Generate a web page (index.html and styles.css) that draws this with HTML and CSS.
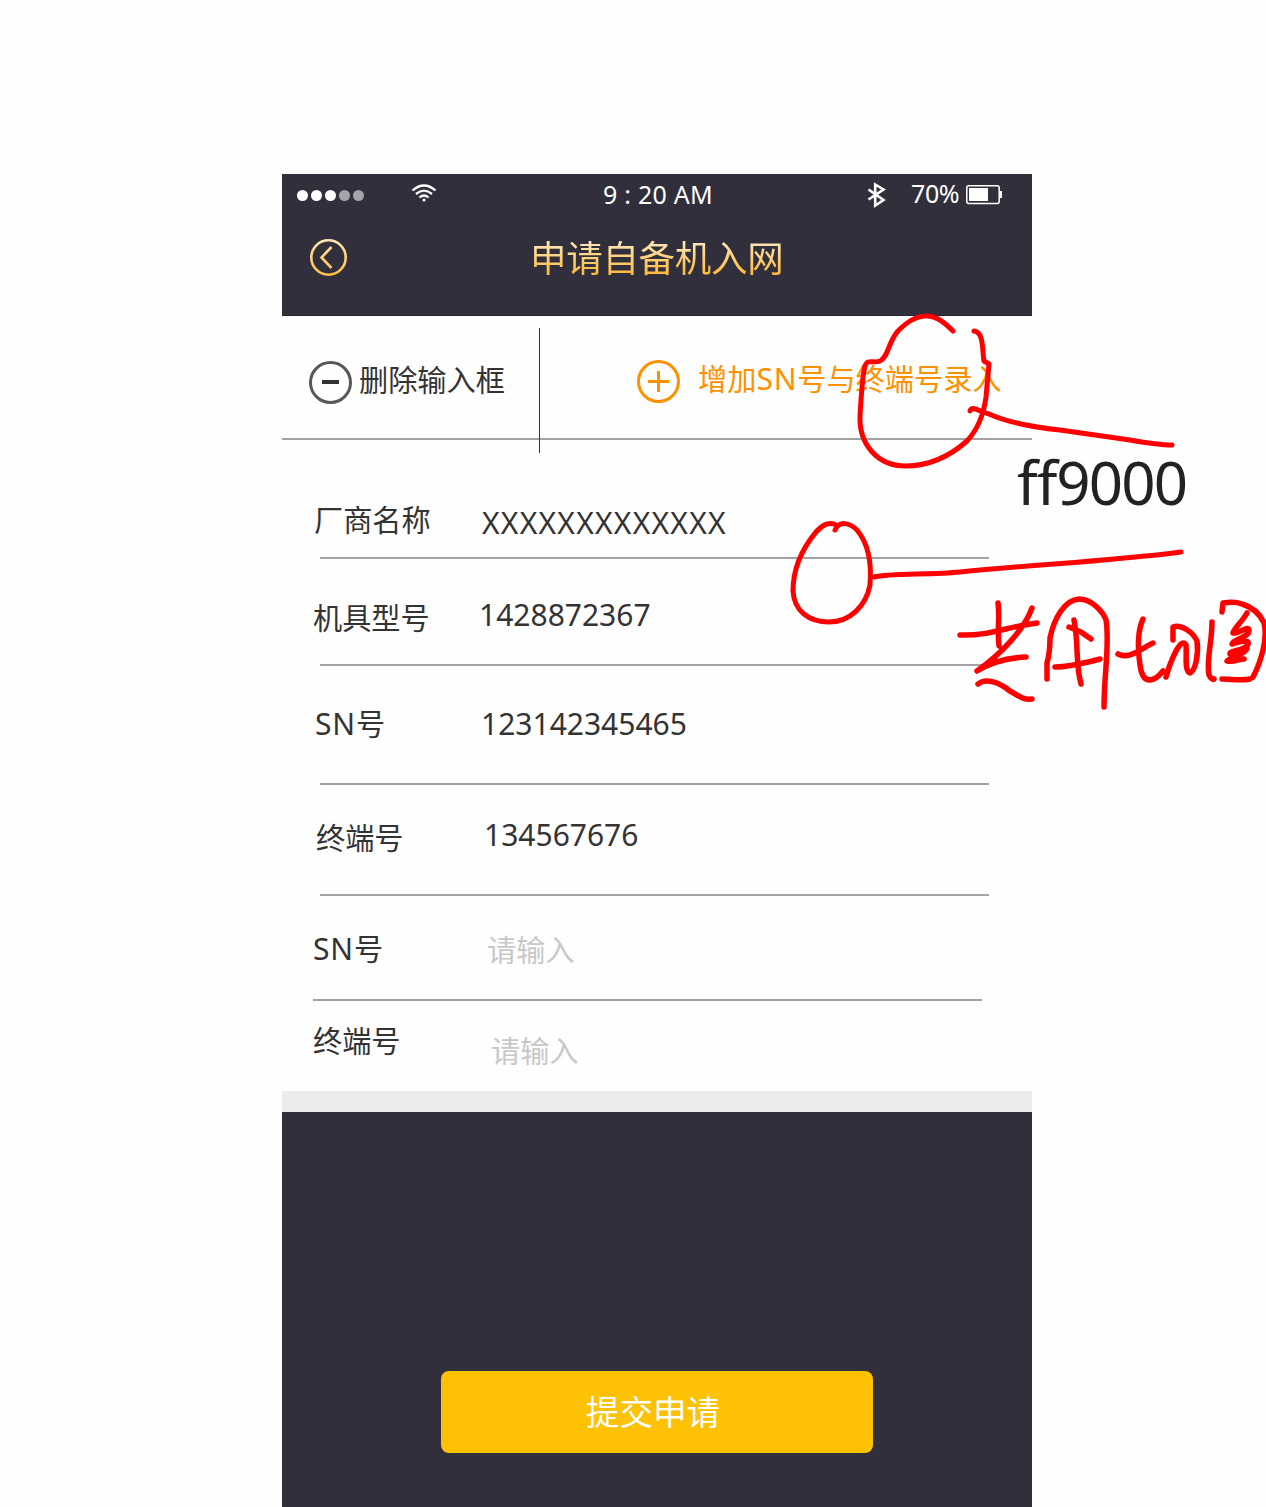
FILE: index.html
```html
<!DOCTYPE html>
<html lang="zh-CN">
<head>
<meta charset="utf-8">
<title>申请自备机入网</title>
<link rel="stylesheet" href="styles.css">
</head>
<body>
<main class="phone">
  <header class="header">
    <div class="status">
      <div class="signal"><i></i><i></i><i></i><i class="off"></i><i class="off"></i></div>
      <svg class="wifi" width="26" height="20" viewBox="0 0 26 20" fill="none" stroke="#fff" stroke-width="2.300">
        <path d="M1.500 6.500Q13-3.600 24.500 6.500M5 10Q13 3.200 21 10M8.500 13.500Q13 9.500 17.500 13.500"/>
        <circle cx="13" cy="16" r="1.500" fill="#fff" stroke="none"/>
      </svg>
      <span class="time">9 : 20 AM</span>
      <svg class="bluetooth" width="20" height="28" viewBox="0 0 20 28" fill="none" stroke="#fff" stroke-width="2.600">
        <path d="M1.500 8.500L16.500 19L8.200 24.500V3.500L16.500 8.500L1.500 18.500"/>
      </svg>
      <span class="percent">70%</span>
      <svg class="battery" width="36" height="20" viewBox="0 0 36 20">
        <rect x=".8" y=".8" width="32.400" height="17.600" rx="2" fill="none" stroke="#fff" stroke-width="1.500"/>
        <rect x="3" y="3" width="19" height="13" fill="#fff"/>
        <rect x="34" y="6" width="2" height="7" fill="#fff"/>
      </svg>
    </div>
    <div class="titlebar">
      <svg class="back" width="38" height="38" viewBox="0 0 38 38" fill="none" stroke="url(#gold)" stroke-width="2.600">
        <defs><linearGradient id="gold" gradientUnits="userSpaceOnUse" x1="0" y1="0" x2="0" y2="38"><stop offset="0" stop-color="#ffe6b4"/><stop offset="1" stop-color="#ffbc40"/></linearGradient></defs>
        <circle cx="18.500" cy="18.500" r="17.200"/>
        <path d="M21.500 8L11.500 18.500L21.500 29"/>
      </svg>
      <h1 class="title">申请自备机入网</h1>
    </div>
  </header>

  <section class="toolbar">
    <div class="action remove">
      <svg width="43" height="43" viewBox="0 0 43 43" fill="none"><circle cx="21.500" cy="21.500" r="20" stroke="#585858" stroke-width="3"/><path d="M13 21H30" stroke="#333" stroke-width="4"/></svg>
      <span>删除输入框</span>
    </div>
    <div class="divider"></div>
    <div class="action add">
      <svg width="43" height="43" viewBox="0 0 43 43" fill="none" stroke="#ff9000" stroke-width="3"><circle cx="21.500" cy="21.500" r="20"/><path d="M11 21.500H32M21.500 11V32"/></svg>
      <span>增加<b>SN</b>号与终端号录入</span>
    </div>
  </section>

  <section class="form">
    <div class="row vendor"><span class="label">厂商名称</span><span class="value">XXXXXXXXXXXXX</span></div>
    <div class="row model"><span class="label">机具型号</span><span class="value">1428872367</span></div>
    <div class="row sn"><span class="label"><b>SN</b>号</span><span class="value">123142345465</span></div>
    <div class="row terminal"><span class="label">终端号</span><span class="value">134567676</span></div>
    <div class="row sn-new"><span class="label"><b>SN</b>号</span><span class="value hint">请输入</span></div>
    <div class="row terminal-new"><span class="label">终端号</span><span class="value hint">请输入</span></div>
  </section>

  <footer class="footer"><button class="submit">提交申请</button></footer>
</main>

<span class="color-note"><span class="letters">ff</span>9000</span>
<svg class="marks" width="1266" height="1507" viewBox="0 0 1266 1507">
  <path d="M953 331C942 320 934 315 925 316C913 317 905 324 898 331C888 342 888 358 880 361C873 364 868 358 865 366C862 378 861 400 860 416C859 444 877 466 906 466C930 466 951 455 967 441C980 427 984 412 986 397L989 364L984 361C982 350 984 332 974 331"/>
  <path d="M970 411C972 405 981 412 989 414C1009 423 1032 427 1060 430L1130 440C1147 443 1160 445 1172 445"/>
  <path d="M836 525C830 521 822 525 816 532C802 549 793 567 793 591C794 611 809 622 829 622C850 622 866 606 870 585C872 560 867 542 857 530C849 522 839 521 835 530"/>
  <path d="M874 577C890 573 930 575 960 572C1035 564 1105 562 1181 552"/>
  <g class="pen">
    <path d="M960 635C990 636 1005 627 1037 623M998 603C1000 617 997 630 999 646M1032 608C1024 630 1001 654 977 671C991 662 1007 658 1026 657M978 684C986 677 1000 683 1010 691C1019 696 1023 700 1032 699"/>
    <path d="M1047 679V663C1049 656 1050 652 1050 638C1054 619 1064 600 1079 599C1092 599 1103 612 1106 620C1110 642 1104 675 1104 707M1074 620C1079 645 1075 662 1081 684M1069 627L1081 632L1091 639M1055 667C1070 667 1088 662 1100 659"/>
    <path d="M1143 619C1137 632 1138 651 1140 665C1143 688 1156 680 1163 671M1118 654C1129 660 1142 648 1153 643M1173 640V627C1181 624 1193 632 1197 641C1199 655 1195 671 1190 673C1184 671 1187 655 1186 645C1183 639 1178 647 1175 653C1171 661 1168 670 1166 677"/>
    <path d="M1212 622C1212 642 1206 663 1209 675C1211 679 1213 680 1214 679M1222 612L1223 603C1230 602 1237 602 1242 604C1252 607 1260 614 1264 623C1268 638 1261 662 1253 677M1222 679C1232 679 1240 681 1250 679M1247 613C1242 622 1234 628 1233 633C1239 634 1249 624 1249 631C1248 638 1233 639 1232 644C1239 642 1250 639 1248 644C1246 651 1229 650 1230 654C1237 654 1251 644 1246 650C1241 657 1228 658 1227 661C1234 662 1239 659 1244 659"/>
  </g>
</svg>
</body>
</html>
```
FILE: styles.css
```css
* { box-sizing: border-box; }

body {
  margin: 0;
  padding: 174px 0 0 282px;
  height: 1507px;
  position: relative;
  overflow: hidden;
  background: #fefefe;
  color: #333;
  font-family: "Noto Sans", "Noto Sans CJK SC", sans-serif;
  font-weight: 400;
}

svg { display: block; flex: none; }
b { font-size: 30px; font-weight: 400; letter-spacing: .8px; }

.phone { width: 750px; height: 1333px; display: flex; flex-direction: column; }

.header {
  height: 142px;
  background: #312f3b;
  border-bottom: 1px solid #25232e;
}
.status { display: flex; height: 42px; color: #fff; white-space: nowrap; }
.signal { display: flex; gap: 3px; margin: 16px 0 0 15px; width: 67px; }
.signal i { width: 11px; height: 11px; border-radius: 50%; background: #fff; flex: none; }
.signal .off { background: #a5a4a8; }
.wifi { margin: 10px 0 0 47px; }
.time { width: 264px; margin: 5px 0 0 166px; font-size: 25px; line-height: 30px; letter-spacing: .25px; }
.bluetooth { margin-top: 7px; }
.percent { width: 55px; margin: 4px 0 0 24px; font-size: 25px; line-height: 30px; letter-spacing: -.4px; }
.battery { margin-top: 11px; }

.titlebar { display: flex; padding: 23px 0 0 28px; }
.title {
  margin: -5px 0 0 182px;
  font-size: 36.500px;
  line-height: 48px;
  letter-spacing: -.3px;
  font-weight: 400;
  background: linear-gradient(#ffe6b4 20%, #ffbc40 80%);
  -webkit-background-clip: text;
  background-clip: text;
  color: transparent;
}

.toolbar { display: flex; height: 124px; border-bottom: 2px solid #a2a2a2; font-size: 29.200px; line-height: 40px; white-space: nowrap; }
.action { display: flex; }
.remove { width: 257px; padding: 45px 0 0 27px; gap: 7px; }
.remove span { margin-top: -1px; }
.divider { width: 1px; height: 125px; margin-top: 12px; background: #333; }
.add { padding: 44px 0 0 97px; gap: 18px; color: #ff9000; }
.add span { margin-top: -1px; }

.form { height: 651px; font-size: 29.200px; line-height: 40px; white-space: nowrap; }
.row { display: flex; width: 669px; margin-left: 38px; border-bottom: 2px solid #a2a2a2; }
.label { width: 167px; flex: none; }
.value { font-size: 30px; }
.hint { font-size: 29.200px; color: #c8c8c8; }

.vendor { height: 119px; }
.vendor .label { margin: 60px 0 0 -6px; }
.vendor .value { margin: 63px 0 0 1px; letter-spacing: 1.250px; }
.model { height: 107px; }
.model .label { margin: 39px 0 0 -7px; }
.model .value { margin: 36px 0 0 -1px; }
.sn { height: 119px; }
.sn .label { margin: 38px 0 0 -5px; }
.sn .value { margin: 38px 0 0 -1px; }
.terminal { height: 111px; }
.terminal .label { margin: 33px 0 0 -4px; }
.terminal .value { margin: 30px 0 0 1px; }
.sn-new { height: 105px; margin-left: 31px; }
.sn-new .label { margin-top: 33px; }
.sn-new .value { margin: 34px 0 0 7px; }
.terminal-new { height: 90px; margin-left: 31px; border-bottom: 0; }
.terminal-new .label { margin-top: 20px; }
.terminal-new .value { margin: 30px 0 0 11px; }

.footer { flex: 1; border-top: 21px solid #ececec; background: #312f3b; padding: 259px 0 0 159px; }
.submit {
  display: block;
  width: 432px;
  height: 82px;
  padding: 0 8px 2px 0;
  border: 0;
  border-radius: 8px;
  background: #ffc103;
  color: #fff;
  font: 400 33.600px/80px "Noto Sans CJK SC", sans-serif;
}

.color-note { position: absolute; left: 1017px; top: 442px; font-size: 60px; line-height: 80px; letter-spacing: -1.800px; color: #222; }
.letters { letter-spacing: -1px; }
.marks { position: absolute; left: 0; top: 0; fill: none; stroke: #f00; stroke-width: 5; stroke-linecap: round; stroke-linejoin: round; }
.pen { stroke-width: 5.500; }
```
